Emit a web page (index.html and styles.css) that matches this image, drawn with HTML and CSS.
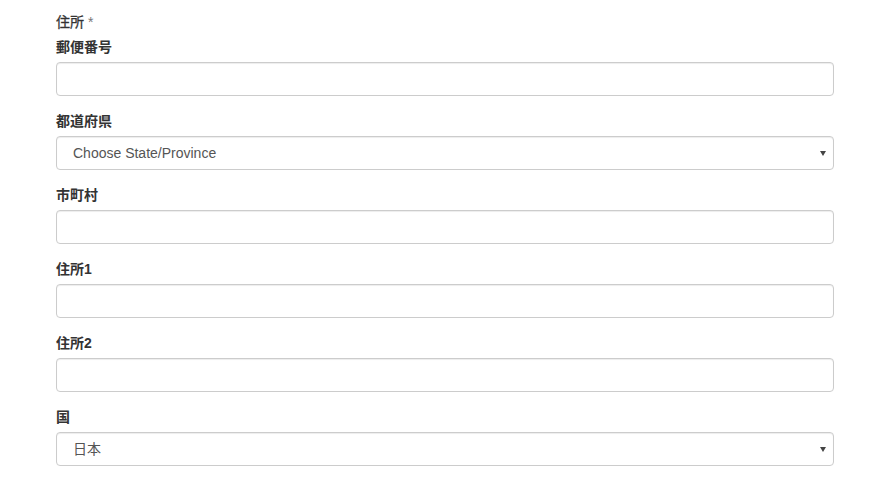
FILE: index.html
```html
<!DOCTYPE html>
<html>
<head>
  <meta charset="UTF-8">
  <title>住所</title>
  <link rel="stylesheet" href="styles.css">
</head>
<body>
  <form class="address">
    <label class="title">住所 <span class="req">*</span></label>
    <div class="form-group">
      <label for="zip">郵便番号</label>
      <input type="text" id="zip" class="form-control">
    </div>
    <div class="form-group">
      <label for="state">都道府県</label>
      <div class="select-wrap">
        <select id="state" class="form-control">
          <option>Choose State/Province</option>
        </select>
      </div>
    </div>
    <div class="form-group">
      <label for="city">市町村</label>
      <input type="text" id="city" class="form-control">
    </div>
    <div class="form-group">
      <label for="addr1">住所1</label>
      <input type="text" id="addr1" class="form-control">
    </div>
    <div class="form-group">
      <label for="addr2">住所2</label>
      <input type="text" id="addr2" class="form-control">
    </div>
    <div class="form-group">
      <label for="country">国</label>
      <div class="select-wrap">
        <select id="country" class="form-control">
          <option>日本</option>
        </select>
      </div>
    </div>
  </form>
</body>
</html>
```

FILE: styles.css
```css
body { margin: 0; font-family: "Liberation Sans", Arial, "Noto Sans CJK JP", sans-serif; font-size: 14px; line-height: 20px; color: #333; background: #fff; }
.address { padding: 12px 62px 0 56px; }
label { display: block; font-weight: bold; margin-bottom: 5px; }
.title { font-weight: normal; -webkit-text-stroke: 0.3px #333; }
.req { color: #777; font-weight: normal; -webkit-text-stroke: 0; }
.form-group { margin-bottom: 15px; }
.form-control { display: block; box-sizing: border-box; width: 100%; height: 34px; padding: 6px 12px; font-family: inherit; font-size: 14px; line-height: 20px; color: #555; background: #fff; border: 1px solid #ccc; border-radius: 4px; box-shadow: inset 0 1px 1px rgba(0,0,0,.075); outline: none; }
.select-wrap { position: relative; }
.select-wrap select { -webkit-appearance: none; appearance: none; padding-left: 16px; }
.select-wrap::after { content: ""; position: absolute; right: 8px; top: 15px; border-left: 3.5px solid transparent; border-right: 3.5px solid transparent; border-top: 5px solid #444; pointer-events: none; }
```
